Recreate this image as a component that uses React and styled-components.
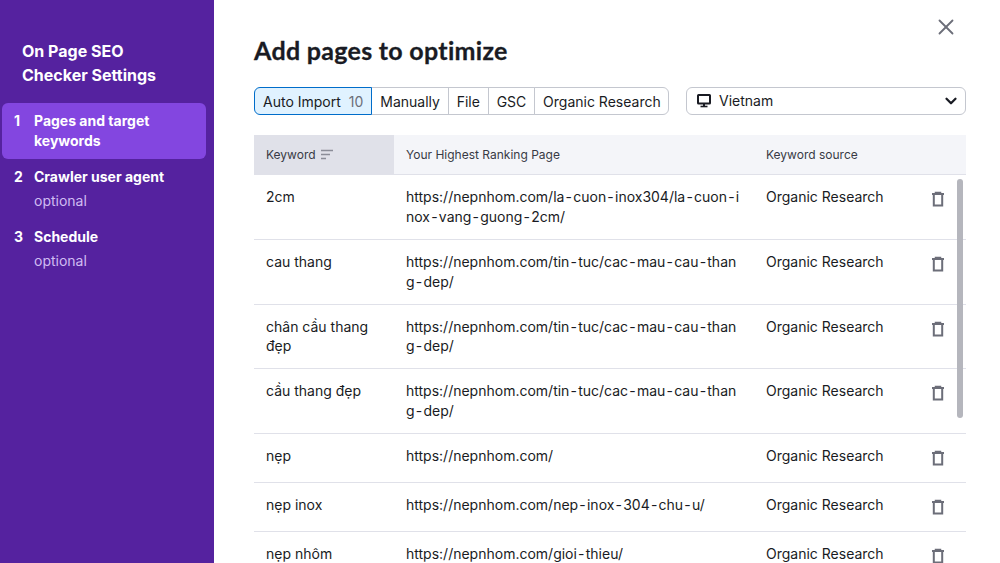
import React from "react";
import styled, { createGlobalStyle } from "styled-components";
import { X, ChevronDown } from "lucide-react";

const GlobalStyle = createGlobalStyle`
    html, body {
        margin: 0;
        padding: 0;
        background: #fff;
        font-family: "Inter", "Liberation Sans", sans-serif;
        overflow: hidden;
    }
    * { box-sizing: border-box; }
`;

const steps = [
    { num: 1, title: "Pages and target keywords", active: true },
    { num: 2, title: "Crawler user agent", note: "optional" },
    { num: 3, title: "Schedule", note: "optional" },
];

const tabs = [
    { label: "Auto Import", count: 10, active: true },
    { label: "Manually" },
    { label: "File" },
    { label: "GSC" },
    { label: "Organic Research" },
];

const stairsUrl = ["https://nepnhom.com/tin-tuc/cac-mau-cau-than", "g-dep/"];

const rows = [
    { keyword: "2cm", url: ["https://nepnhom.com/la-cuon-inox304/la-cuon-i", "nox-vang-guong-2cm/"] },
    { keyword: "cau thang", url: stairsUrl },
    { keyword: "chân cầu thang đẹp", url: stairsUrl },
    { keyword: "cầu thang đẹp", url: stairsUrl },
    { keyword: "nẹp", url: ["https://nepnhom.com/"] },
    { keyword: "nẹp inox", url: ["https://nepnhom.com/nep-inox-304-chu-u/"] },
    { keyword: "nẹp nhôm", url: ["https://nepnhom.com/gioi-thieu/"] },
];

function TrashIcon() {
    return (
        <svg width="16" height="16" viewBox="0 0 16 16" fill="none" stroke="#6c6e79" strokeWidth="2">
            <path d="M2 3h12" />
            <path d="M5.5 3V1.5h5V3" strokeWidth="1.5" />
            <path d="M3.8 3v11.5h8.4V3" />
        </svg>
    );
}

function SortIcon() {
    return (
        <svg width="14" height="12" viewBox="0 0 14 12" fill="none" stroke="#8b8d98" strokeWidth="1.5">
            <path d="M1 1.5h12M1 5.5h9M1 9.5h5" />
        </svg>
    );
}

function MonitorIcon() {
    return (
        <svg width="14" height="14" viewBox="0 0 14 14" fill="none">
            <rect x="1" y="1" width="12" height="8.5" rx="0.5" stroke="#191b23" strokeWidth="2" />
            <path d="M3.5 12.5h7" stroke="#191b23" strokeWidth="1.6" />
            <path d="M7 10v2" stroke="#191b23" strokeWidth="2" />
        </svg>
    );
}

// the hyphens in the urls sit wider than Inter's own
function UrlLineText({ text }) {
    return (
        <UrlLine>
            {text.split("-").map((part, i) => (
                <React.Fragment key={i}>
                    {i > 0 && <Hyphen>-</Hyphen>}
                    {part}
                </React.Fragment>
            ))}
        </UrlLine>
    );
}

export default function App() {
    return (
        <>
            <GlobalStyle />
            <Page>
                <Sidebar>
                    <SideTitle>On Page SEO Checker Settings</SideTitle>
                    <Steps>
                        {steps.map((step) => (
                            <Step key={step.num} $active={step.active}>
                                <StepNum>{step.num}</StepNum>
                                <div>
                                    <StepTitle>{step.title}</StepTitle>
                                    {step.note && <StepNote>{step.note}</StepNote>}
                                </div>
                            </Step>
                        ))}
                    </Steps>
                </Sidebar>

                <Main>
                    <CloseBtn aria-label="Close">
                        <X size={26} strokeWidth={1.7} color="#6c6e79" />
                    </CloseBtn>
                    <Title>Add pages to optimize</Title>

                    <Toolbar>
                        <Tabs>
                            {tabs.map((tab) => (
                                <Tab key={tab.label} $active={tab.active}>
                                    {tab.label}
                                    {tab.count && <TabCount>{tab.count}</TabCount>}
                                </Tab>
                            ))}
                        </Tabs>
                        <CountrySelect>
                            <MonitorIcon />
                            <CountryName>Vietnam</CountryName>
                            <ChevronDown size={18} strokeWidth={3} color="#191b23" />
                        </CountrySelect>
                    </Toolbar>

                    <TableWrap>
                        <HeadRow>
                            <HeadCell $sorted>
                                Keyword <SortIcon />
                            </HeadCell>
                            <HeadCell>Your Highest Ranking Page</HeadCell>
                            <HeadCell>Keyword source</HeadCell>
                            <HeadCell />
                        </HeadRow>
                        {rows.map((row) => (
                            <Row key={row.keyword}>
                                <Cell>{row.keyword}</Cell>
                                <Cell>
                                    {row.url.map((line) => (
                                        <UrlLineText key={line} text={line} />
                                    ))}
                                </Cell>
                                <Cell>Organic Research</Cell>
                                <IconCell>
                                    <TrashIcon />
                                </IconCell>
                            </Row>
                        ))}
                        <ScrollThumb />
                    </TableWrap>
                </Main>
            </Page>
        </>
    );
}

// --- STYLES ---

const Page = styled.div`
    display: flex;
    height: 100vh;
    overflow: hidden;
`;

const Sidebar = styled.aside`
    flex: 0 0 214px;
    background: #55229f;
    padding: 39px 8px 0 2px;
    color: #fff;
`;

const SideTitle = styled.h2`
    margin: 0 20px 16px;
    font-size: 16px;
    line-height: 24px;
    font-weight: 700;
    width: 150px;
`;

const Steps = styled.div`
    display: flex;
    flex-direction: column;
`;

const Step = styled.div`
    display: flex;
    padding: 8px 12px;
    border-radius: 6px;
    background: ${(p) => (p.$active ? "#8346e0" : "transparent")};
`;

const StepNum = styled.span`
    flex: 0 0 20px;
    font-size: 14px;
    line-height: 20px;
    font-weight: 700;
`;

const StepTitle = styled.div`
    font-size: 14px;
    line-height: 20px;
    font-weight: 700;
`;

const StepNote = styled.div`
    margin-top: 4px;
    font-size: 14px;
    line-height: 20px;
    color: #d0bcf2;
`;

const Main = styled.main`
    position: relative;
    flex: 1;
    padding: 35px 34px 0 40px;
    color: #191b23;
`;

const CloseBtn = styled.button`
    position: absolute;
    top: 14px;
    right: 41px;
    display: flex;
    padding: 0;
    border: 0;
    background: none;
`;

const Title = styled.h1`
    margin: 0 0 22px;
    font-family: "Lato", "Inter", sans-serif;
    font-size: 25px;
    line-height: 30px;
    font-weight: 700;
    letter-spacing: 0.3px;
    -webkit-text-stroke: 0.3px #191b23;
`;

const Toolbar = styled.div`
    display: flex;
    justify-content: space-between;
    margin-bottom: 20px;
`;

const Tabs = styled.div`
    display: flex;
`;

const Tab = styled.div`
    display: flex;
    align-items: center;
    height: 28px;
    padding: 0 ${(p) => (p.$active ? "8px" : "7.75px")} 0 8px;
    margin-left: -1px;
    font-size: 14px;
    color: #191b23;
    border: 1px solid ${(p) => (p.$active ? "#006dca" : "#c4c7cf")};
    background: ${(p) => (p.$active ? "#e0f2ff" : "#fff")};
    position: ${(p) => (p.$active ? "relative" : "static")};
    z-index: ${(p) => (p.$active ? 1 : 0)};

    &:first-child {
        margin-left: 0;
        border-radius: 6px 0 0 6px;
    }
    &:last-child {
        border-radius: 0 6px 6px 0;
    }
`;

const TabCount = styled.span`
    margin-left: 8px;
    color: #6c6e79;
`;

const CountrySelect = styled.div`
    display: flex;
    align-items: center;
    width: 280px;
    height: 28px;
    padding: 0 5px 0 10px;
    border: 1px solid #c4c7cf;
    border-radius: 6px;
    font-size: 14px;
`;

const CountryName = styled.span`
    flex: 1;
    margin: 0 0 2px 8px;
`;

const TableWrap = styled.div`
    position: relative;
`;

const columns = "140px 360px 1fr 44px";

const HeadRow = styled.div`
    display: grid;
    grid-template-columns: ${columns};
    height: 40px;
    background: #f4f5f9;
    border-bottom: 1px solid #e0e1e9;
`;

const HeadCell = styled.div`
    display: flex;
    align-items: center;
    gap: 4px;
    padding: 0 12px;
    font-size: 12px;
    color: #383a45;
    background: ${(p) => (p.$sorted ? "#e0e1e9" : "transparent")};
`;

const Row = styled.div`
    display: grid;
    grid-template-columns: ${columns};
    min-height: 49px;
    border-bottom: 1px solid #e0e1e9;
`;

const Cell = styled.div`
    padding: 12px;
    font-size: 14px;
    line-height: 1.42;
    color: #191b23;
`;

const UrlLine = styled.div`
    white-space: nowrap;
`;

const Hyphen = styled.span`
    margin: 0 1.2px;
`;

const IconCell = styled.div`
    display: flex;
    justify-content: flex-start;
    padding: 16px 0 0 8px;
`;

const ScrollThumb = styled.div`
    position: absolute;
    top: 44px;
    right: 3px;
    width: 6px;
    height: 239px;
    border-radius: 3px;
    background: #b5b6bd;
`;
